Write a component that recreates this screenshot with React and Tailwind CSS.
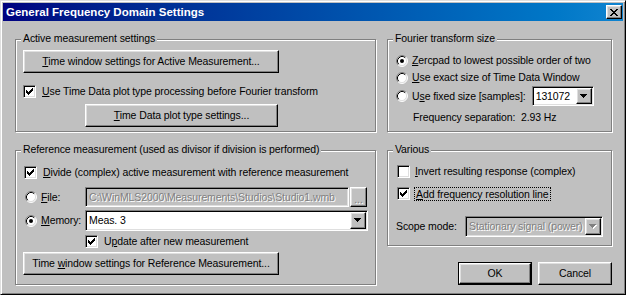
import React from "react";

// classic win9x bevels
const raised =
  "border border-t-white border-l-white border-r-black border-b-black shadow-[inset_-1px_-1px_0_#808080,inset_1px_1px_0_#dfdfdf]";
const sunken =
  "border border-t-[#808080] border-l-[#808080] border-r-white border-b-white shadow-[inset_1px_1px_0_#000,inset_-1px_-1px_0_#dfdfdf]";
const disabledText = "text-[#808080] [text-shadow:1px_1px_0_#fff]";

function U({ children }) {
  return <span className="underline underline-offset-[1px]">{children}</span>;
}

function Button({ children, className = "" }) {
  return (
    <div className={`flex items-center justify-center bg-[#c0c0c0] ${raised} ${className}`}>
      {children}
    </div>
  );
}

function Check({ checked }) {
  return (
    <div className={`w-[13px] h-[13px] shrink-0 bg-white ${sunken}`}>
      {checked && (
        <svg width="11" height="11" viewBox="0 0 11 11" className="block" shapeRendering="crispEdges">
          <rect x="2" y="4" width="1" height="3" fill="#000" />
          <rect x="3" y="5" width="1" height="3" fill="#000" />
          <rect x="4" y="6" width="1" height="3" fill="#000" />
          <rect x="5" y="5" width="1" height="3" fill="#000" />
          <rect x="6" y="4" width="1" height="3" fill="#000" />
          <rect x="7" y="3" width="1" height="3" fill="#000" />
          <rect x="8" y="2" width="1" height="3" fill="#000" />
        </svg>
      )}
    </div>
  );
}

function Radio({ checked }) {
  return (
    <svg width="12" height="12" viewBox="0 0 12 12" className="block shrink-0">
      <circle cx="6" cy="6" r="5" fill="#fff" />
      <path d="M2.11 9.89 A5.5 5.5 0 0 1 9.89 2.11" fill="none" stroke="#808080" />
      <path d="M9.89 2.11 A5.5 5.5 0 0 1 2.11 9.89" fill="none" stroke="#fff" />
      <path d="M2.82 9.18 A4.5 4.5 0 0 1 9.18 2.82" fill="none" stroke="#000" />
      <path d="M9.18 2.82 A4.5 4.5 0 0 1 2.82 9.18" fill="none" stroke="#dfdfdf" />
      {checked && <circle cx="6" cy="6" r="2" fill="#000" />}
    </svg>
  );
}

function Arrow({ disabled }) {
  const c = disabled ? "#808080" : "#000";
  return (
    <div className={`w-[16px] h-full shrink-0 flex items-center justify-center bg-[#c0c0c0] ${raised}`}>
      <svg width="8" height="5" viewBox="0 0 8 5" className="block" shapeRendering="crispEdges">
        {disabled && <path d="M1 1h7v1h-1v1h-1v1h-1v1h-1v-1h-1v-1h-1v-1h-1z" fill="#fff" />}
        <path d="M0 0h7v1h-1v1h-1v1h-1v1h-1v-1h-1v-1h-1v-1h-1z" fill={c} />
      </svg>
    </div>
  );
}

function Combo({ value, className = "", disabled }) {
  return (
    <div className={`flex p-[1px] ${disabled ? "bg-[#c0c0c0]" : "bg-white"} ${sunken} ${className}`}>
      <div className={`flex-1 flex items-center pl-[2px] whitespace-nowrap overflow-hidden ${disabled ? disabledText : ""}`}>
        {value}
      </div>
      <Arrow disabled={disabled} />
    </div>
  );
}

function Group({ label, className = "", children }) {
  return (
    <div className={`relative border border-[#808080] shadow-[inset_1px_1px_0_#fff,1px_1px_0_#fff] ${className}`}>
      <span className="absolute top-[-8px] left-[5px] px-[2px] bg-[#c0c0c0] leading-[13px] whitespace-nowrap">
        {label}
      </span>
      {children}
    </div>
  );
}

export default function App() {
  return (
    <div className="w-[626px] h-[295px] flex flex-col overflow-hidden bg-[#c0c0c0] border border-t-[#dfdfdf] border-l-[#dfdfdf] border-r-black border-b-black shadow-[inset_1px_1px_0_#fff,inset_-1px_-1px_0_#808080] p-[2px] text-black text-[10.5px] leading-[13px] tracking-[-0.1px] font-['Liberation_Sans',Arial,sans-serif]">
      {/* Title bar */}
      <div className="h-[18px] shrink-0 flex items-center justify-between bg-linear-to-r from-[#000080] to-[#1084d0] pl-[3px] pr-[1px]">
        <span className="text-white font-bold text-[11.5px] tracking-normal">General Frequency Domain Settings</span>
        <div className={`w-[16px] h-[14px] flex items-center justify-center bg-[#c0c0c0] ${raised}`}>
          <svg width="8" height="7" viewBox="0 0 8 7" className="block" shapeRendering="crispEdges">
            <path d="M0 0h2v1h1v1h2v-1h1v-1h2v1h-1v1h-1v1h-1v1h1v1h1v1h1v1h-2v-1h-1v-1h-2v1h-1v1h-2v-1h1v-1h1v-1h1v-1h-1v-1h-1v-1h-1z" fill="#000" />
          </svg>
        </div>
      </div>

      <div className="pl-[12px] pt-[18px] grid grid-cols-[361px_225px] gap-x-[11px] gap-y-[18px] items-start">
        {/* Active measurement settings */}
        <Group label="Active measurement settings" className="h-[93px] pl-[7px] pt-[10px]">
          <Button className="w-[256px] h-[23px]">
            <span><U>T</U>ime window settings for Active Measurement...</span>
          </Button>
          <div className="mt-[12px] h-[13px] flex items-center gap-[6px]">
            <Check checked />
            <span className="whitespace-nowrap"><U>U</U>se Time Data plot type processing before Fourier transform</span>
          </div>
          <Button className="ml-[62px] mt-[6px] w-[193px] h-[23px]">
            <span><U>T</U>ime Data plot type settings...</span>
          </Button>
        </Group>

        {/* Fourier transform size */}
        <Group label="Fourier transform size" className="h-[93px] pl-[8px] pt-[12px]">
          <div className="h-[17px] flex items-center gap-[4px]">
            <Radio checked />
            <span className="whitespace-nowrap"><U>Z</U>ercpad to lowest possible order of two</span>
          </div>
          <div className="h-[17px] flex items-center gap-[4px]">
            <Radio />
            <span className="whitespace-nowrap"><U>U</U>se exact size of Time Data Window</span>
          </div>
          <div className="h-[20px] flex items-center gap-[4px]">
            <Radio />
            <span className="whitespace-nowrap">U<U>s</U>e fixed size [samples]:</span>
            <Combo value="131072" className="ml-[2px] w-[62px] h-[20px]" />
          </div>
          <div className="mt-[5px] pl-[17px] whitespace-pre">Frequency separation:  2.93 Hz</div>
        </Group>

        {/* Reference measurement */}
        <Group label="Reference measurement (used as divisor if division is performed)" className="h-[135px] pl-[7px] pt-[15px]">
          <div className="h-[13px] pl-[1px] flex items-center gap-[6px]">
            <Check checked />
            <span className="whitespace-nowrap"><U>D</U>ivide (complex) active measurement with reference measurement</span>
          </div>
          <div className="mt-[8px] h-[20px] pl-[2px] flex items-center">
            <Radio />
            <span className="ml-[4px] w-[44px]"><U>F</U>ile:</span>
            <div className={`w-[264px] h-[20px] flex items-center pl-[3px] bg-[#c0c0c0] whitespace-nowrap overflow-hidden ${sunken}`}>
              <span className={disabledText}>C:\WinMLS2000\Measurements\Studios\Studio1.wmb</span>
            </div>
            <Button className="ml-[1px] w-[17px] h-[20px]">
              <span className={`${disabledText} leading-[8px] pt-[3px]`}>...</span>
            </Button>
          </div>
          <div className="mt-[3px] h-[21px] pl-[2px] flex items-center">
            <Radio checked />
            <span className="ml-[4px] w-[44px]"><U>M</U>emory:</span>
            <Combo value="Meas. 3" className="w-[283px] h-[21px]" />
          </div>
          <div className="mt-[4px] h-[13px] pl-[62px] flex items-center gap-[6px]">
            <Check checked />
            <span className="whitespace-nowrap">U<U>p</U>date after new measurement</span>
          </div>
          <Button className="mt-[4px] w-[256px] h-[23px]">
            <span>Time <U>w</U>indow settings for Reference Measurement...</span>
          </Button>
        </Group>

        {/* Various + dialog buttons */}
        <div className="flex flex-col">
          <Group label="Various" className="h-[96px] pl-[8px] pt-[14px]">
            <div className="h-[13px] pl-[1px] flex items-center gap-[5px]">
              <Check />
              <span className="whitespace-nowrap"><U>I</U>nvert resulting response (complex)</span>
            </div>
            <div className="mt-[9px] h-[13px] pl-[1px] flex items-center gap-[4px]">
              <Check checked />
              <span className="whitespace-nowrap border border-dotted border-black px-[1px] leading-[12px]"><U>A</U>dd frequency resolution line</span>
            </div>
            <div className="mt-[16px] h-[21px] flex items-center">
              <span className="w-[69px] whitespace-nowrap">Scope mode:</span>
              <Combo value="Stationary signal (power)" className="w-[138px] h-[21px]" disabled />
            </div>
          </Group>
          <div className="mt-[16px] flex justify-end gap-[6px]">
            <div className="w-[74px] h-[23px] border border-black">
              <Button className="w-full h-full">OK</Button>
            </div>
            <Button className="w-[74px] h-[23px]">Cancel</Button>
          </div>
        </div>
      </div>
    </div>
  );
}
